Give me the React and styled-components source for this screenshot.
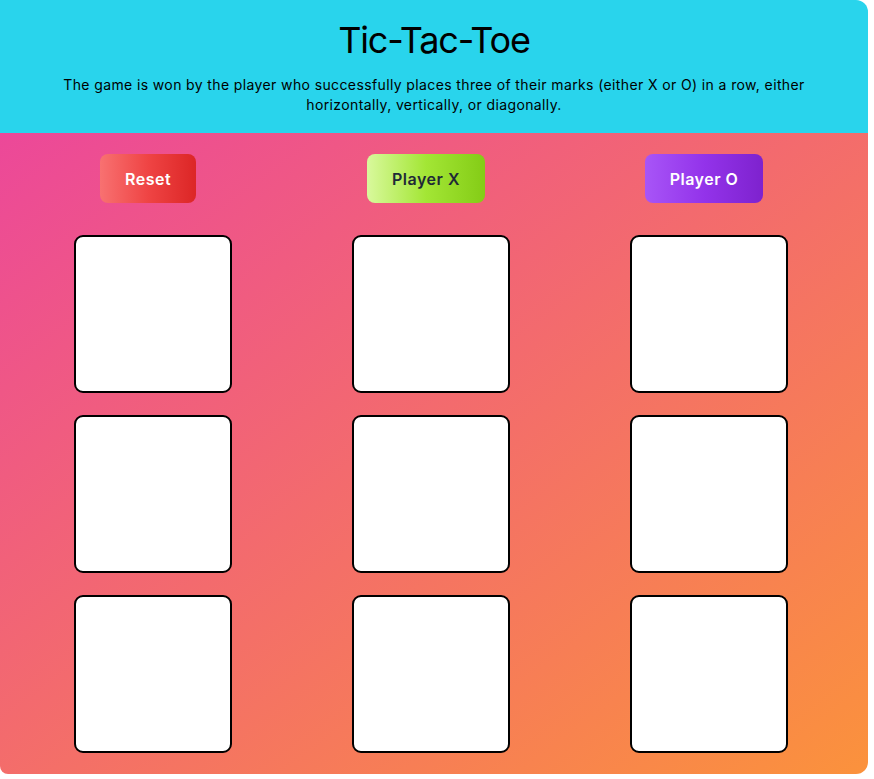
import React, {useState} from 'react';
import styled, {createGlobalStyle} from "styled-components";

const GlobalStyle = createGlobalStyle`
  * {
    box-sizing: border-box;
  }

  body {
    margin: 0;
    background: #ffffff;
    font-family: Inter, "Noto Sans", "Liberation Sans", sans-serif;
  }
`

const players = {
    reset: {from: '#f87171', via: '#ef4444', to: '#dc2626', color: '#ffffff'},
    x: {from: '#d9f99d', via: '#a3e635', to: '#84cc16', color: '#1f2937'},
    o: {from: '#a855f7', via: '#9333ea', to: '#7e22ce', color: '#ffffff'},
}

const App = () => {
    const [board, setBoard] = useState(Array(9).fill(null))
    const [turn, setTurn] = useState('X')

    const play = (i) => {
        if (board[i]) return
        const next = [...board]
        next[i] = turn
        setBoard(next)
        setTurn(turn === 'X' ? 'O' : 'X')
    }

    return (
        <>
            <GlobalStyle/>
            <Game>
                <Header>
                    <h1>Tic-Tac-Toe</h1>
                    <p>
                        The game is won by the player who successfully places three of their marks (either X or O)
                        in a row, either horizontally, vertically, or diagonally.
                    </p>
                </Header>
                <Board>
                    <Controls>
                        <Button kind="reset" onClick={() => setBoard(Array(9).fill(null))}>Reset</Button>
                        <Button kind="x" onClick={() => setTurn('X')}>Player X</Button>
                        <Button kind="o" onClick={() => setTurn('O')}>Player O</Button>
                    </Controls>
                    <Grid>
                        {board.map((mark, i) => (
                            <Cell key={i} onClick={() => play(i)}>{mark}</Cell>
                        ))}
                    </Grid>
                </Board>
            </Game>
        </>
    );
};

const Game = styled.div`
  width: 868px;
  height: 774px;
  display: flex;
  flex-direction: column;
  border-radius: 0 12px 12px 8px;
  overflow: hidden;
`

const Header = styled.header`
  background: #29d4ec;
  height: 133px;
  padding: 20px 20px 0;
  text-align: center;
  color: #000000;

  > h1 {
    margin: 0;
    font-size: 36px;
    line-height: 40px;
    font-weight: 400;
    letter-spacing: -1.2px;
  }

  > p {
    max-width: 768px;
    margin: 15px auto 0;
    font-size: 14px;
    line-height: 20px;
    letter-spacing: 0.38px;
  }
`

const Board = styled.main`
  flex: 1;
  background: linear-gradient(to bottom right, #ec4899, #fb923c);
  padding: 21px 0 0;
`

const Controls = styled.div`
  display: grid;
  grid-template-columns: repeat(3, 278px);
  justify-items: center;
  padding-left: 9px;
`

const Button = styled.button`
  height: 49px;
  padding: 0 25px;
  border: none;
  border-radius: 8px;
  font-family: inherit;
  font-size: 16px;
  font-weight: 600;
  letter-spacing: 0.5px;
  cursor: pointer;
  color: ${({kind}) => players[kind].color};
  background: ${({kind}) => `linear-gradient(to right, ${players[kind].from}, ${players[kind].via}, ${players[kind].to})`};
`

const Grid = styled.div`
  display: grid;
  grid-template-columns: repeat(3, 278px);
  row-gap: 22px;
  justify-items: center;
  padding-left: 14px;
  margin-top: 32px;
`

const Cell = styled.button`
  width: 158px;
  height: 158px;
  background: #ffffff;
  border: 2px solid #000000;
  border-radius: 9px;
  font-family: inherit;
  font-size: 64px;
  font-weight: 700;
  cursor: pointer;
`

export default App;
